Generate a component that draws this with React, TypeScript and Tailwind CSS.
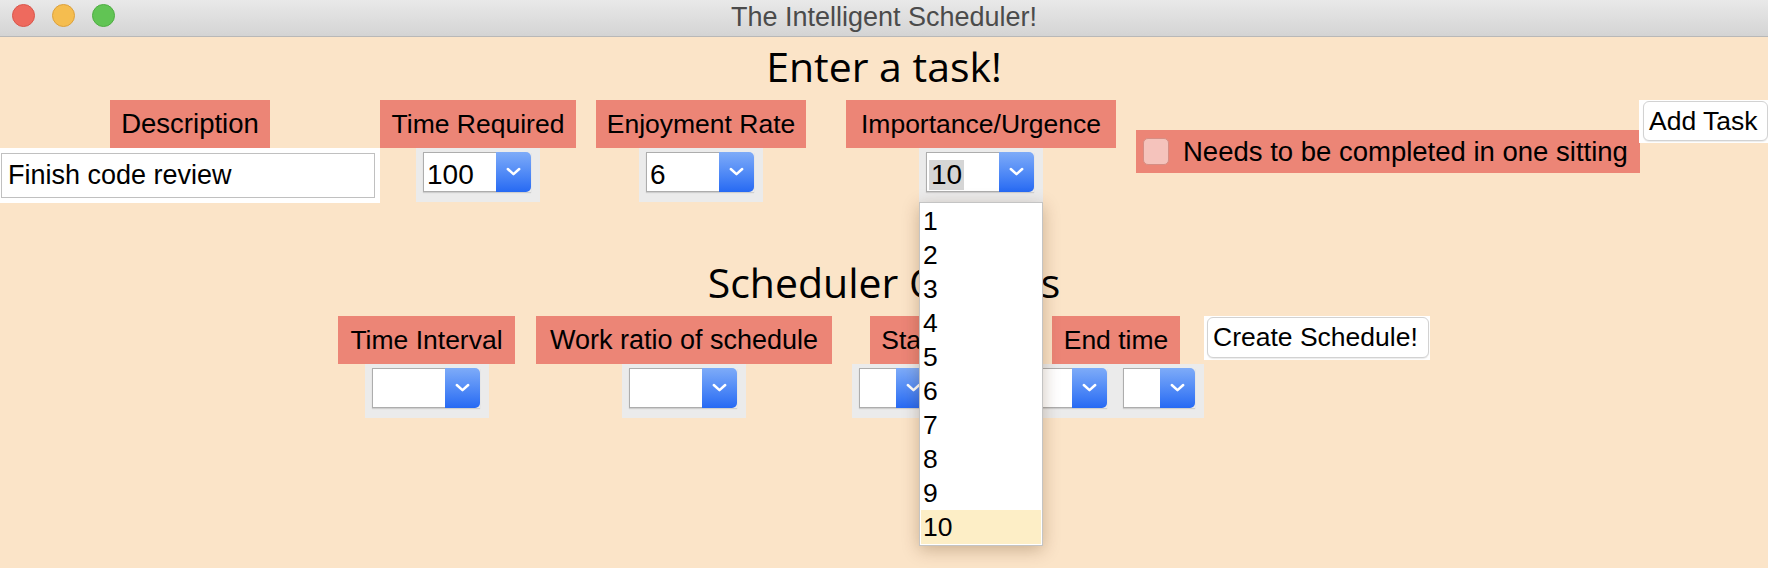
import React from "react";

const SANS = "font-['Liberation_Sans',Arial,sans-serif]";
const HEAD = "font-['Open_Sans','DejaVu_Sans',sans-serif]";
const LBL =
  "bg-[#ec8576] h-[48px] flex items-center justify-center text-black text-[26.5px] leading-none whitespace-nowrap";

function Chevron() {
  return (
    <svg width="15" height="10" viewBox="0 0 15 10">
      <path
        d="M1.8 2 L7.5 7.2 L13.2 2"
        fill="none"
        stroke="white"
        strokeWidth="2.5"
        strokeLinecap="round"
        strokeLinejoin="round"
      />
    </svg>
  );
}

function Combo({
  wClass,
  value,
  selected,
}: {
  wClass: string;
  value?: string;
  selected?: boolean;
}) {
  return (
    <div className={`flex h-[40px] shadow-[0_1px_1px_rgba(0,0,0,0.12)] ${wClass}`}>
      <div className="flex-1 min-w-0 bg-white border border-r-0 border-[#adadad] pl-[2px] pt-[7px] text-[28px] leading-[30px] text-black overflow-hidden whitespace-nowrap">
        {value !== undefined &&
          (selected ? (
            <span className="inline-block h-[30px] leading-[30px] px-[2px] bg-[#d5d5d5]">{value}</span>
          ) : (
            <span className="inline-block h-[30px] leading-[30px] pl-[1px]">{value}</span>
          ))}
      </div>
      <div className="w-[35px] shrink-0 rounded-r-[5px] bg-linear-to-b from-[#7eabf8] to-[#2669f3] flex items-center justify-center">
        <Chevron />
      </div>
    </div>
  );
}

function Panel({ children, wClass, extra }: { children: React.ReactNode; wClass: string; extra?: React.ReactNode }) {
  return (
    <div className={`relative h-[54px] bg-[#ebebeb] pl-[7px] pt-[4px] ${wClass}`}>
      {children}
      {extra}
    </div>
  );
}

function Popup() {
  const items = ["1", "2", "3", "4", "5", "6", "7", "8", "9", "10"];
  return (
    <div className="absolute left-0 top-[54px] z-10 w-[124px] bg-white border border-[#c4c4c4] p-[1px] shadow-[0_4px_16px_rgba(80,40,0,0.28)]">
      {items.map((it) => (
        <div
          key={it}
          className={`h-[34px] leading-[34px] pl-[2px] text-[26.5px] text-black ${
            it === "10" ? "bg-[#fdeec6]" : ""
          }`}
        >
          {it}
        </div>
      ))}
    </div>
  );
}

function Button({ label, outerW, innerW, h, innerH, ml }: { label: string; outerW: string; innerW: string; h: string; innerH: string; ml: string }) {
  return (
    <div className={`self-start bg-white ${outerW} ${h} pt-[1px] ${ml}`}>
      <div
        className={`${innerW} ${innerH} rounded-[6px] border border-[#d2d2d2] bg-white shadow-[0_1px_1px_rgba(0,0,0,0.08)] flex items-center pl-[5px] text-[26.5px] leading-none text-black whitespace-nowrap`}
      >
        {label}
      </div>
    </div>
  );
}

export default function App() {
  return (
    <div className={`relative w-[1768px] h-[568px] overflow-hidden bg-[#fbe4c8] ${SANS}`}>
      {/* title bar */}
      <div className="relative h-[37px] bg-linear-to-b from-[#e9e9e9] to-[#d4d4d4] border-b border-[#b8b8b8] flex items-start">
        <div className="flex gap-[17px] pl-[12px] pt-[4px]">
          <div className="w-[23px] h-[23px] rounded-full bg-[#ee6a5e] border border-[#d9564b]" />
          <div className="w-[23px] h-[23px] rounded-full bg-[#f5bd4f] border border-[#dca13c]" />
          <div className="w-[23px] h-[23px] rounded-full bg-[#61c454] border border-[#4ead42]" />
        </div>
        <div className="absolute inset-x-0 top-0 h-[34px] leading-[34px] text-center text-[27px] text-[#4b4b4b]">
          The Intelligent Scheduler!
        </div>
      </div>

      {/* heading 1 */}
      <div className={`mt-[5px] h-[48px] leading-[48px] text-center text-[41px] text-black ${HEAD}`}>
        Enter a task!
      </div>

      {/* row 1 */}
      <div className="mt-[10px] flex items-center">
        <div className="w-[380px] flex flex-col items-center">
          <div className={`${LBL} w-[160px] text-[27.5px]`}>Description</div>
          <div className="w-[380px] h-[55px] bg-white pl-[1px] pt-[5px] pr-[5px] pb-[5px]">
            <div className="h-[45px] border border-[#c0c0c0] flex items-center pl-[6px] text-[27px] leading-none text-black whitespace-nowrap">
              Finish code review
            </div>
          </div>
        </div>
        <div className="w-[196px] flex flex-col items-center self-start">
          <div className={`${LBL} w-[196px]`}>Time Required</div>
          <Panel wClass="w-[124px]">
            <Combo wClass="w-[108px]" value="100" />
          </Panel>
        </div>
        <div className="ml-[20px] w-[210px] flex flex-col items-center self-start">
          <div className={`${LBL} w-[210px]`}>Enjoyment Rate</div>
          <Panel wClass="w-[124px]">
            <Combo wClass="w-[108px]" value="6" />
          </Panel>
        </div>
        <div className="ml-[40px] w-[270px] flex flex-col items-center self-start relative z-10">
          <div className={`${LBL} w-[270px]`}>Importance/Urgence</div>
          <Panel wClass="w-[124px]" extra={<Popup />}>
            <Combo wClass="w-[108px]" value="10" selected />
          </Panel>
        </div>
        <div className="ml-[20px] w-[504px] h-[43px] bg-[#ec8576] flex items-center">
          <div className="ml-[7px] w-[26px] h-[27px] rounded-[5px] bg-[#f5c3bc] border border-[#d68e84]" />
          <div className="ml-[14px] text-[27.5px] leading-none text-black whitespace-nowrap">
            Needs to be completed in one sitting
          </div>
        </div>
        <Button label="Add Task" outerW="w-[129px]" innerW="w-[125px]" h="h-[43px]" innerH="h-[40px]" ml="-ml-[1px] pl-[4px]" />
      </div>

      {/* heading 2 */}
      <div className={`mt-[55px] h-[48px] leading-[48px] text-center text-[41px] text-black ${HEAD}`}>
        Scheduler Options
      </div>

      {/* row 2 */}
      <div className="mt-[10px] flex justify-center">
        <div className="w-[177px] flex flex-col items-center">
          <div className={`${LBL} w-[177px]`}>Time Interval</div>
          <Panel wClass="w-[124px]">
            <Combo wClass="w-[108px]" />
          </Panel>
        </div>
        <div className="ml-[21px] w-[296px] flex flex-col items-center">
          <div className={`${LBL} w-[296px] text-[27px]`}>Work ratio of schedule</div>
          <Panel wClass="w-[124px]">
            <Combo wClass="w-[108px]" />
          </Panel>
        </div>
        <div className="ml-[20px] w-[352px] flex flex-col">
          <div className="flex">
            <div className={`${LBL} ml-[18px] w-[136px]`}>Start time</div>
            <div className={`${LBL} ml-[46px] w-[128px]`}>End time</div>
          </div>
          <div className="h-[54px] bg-[#ebebeb] pl-[7px] pt-[4px] flex gap-[16px]">
            <Combo wClass="w-[72px]" />
            <Combo wClass="w-[160px]" />
            <Combo wClass="w-[72px]" />
          </div>
        </div>
        <Button label="Create Schedule!" outerW="w-[226px]" innerW="w-[222px]" h="h-[44px]" innerH="h-[41px]" ml="pl-[3px]" />
      </div>
    </div>
  );
}
